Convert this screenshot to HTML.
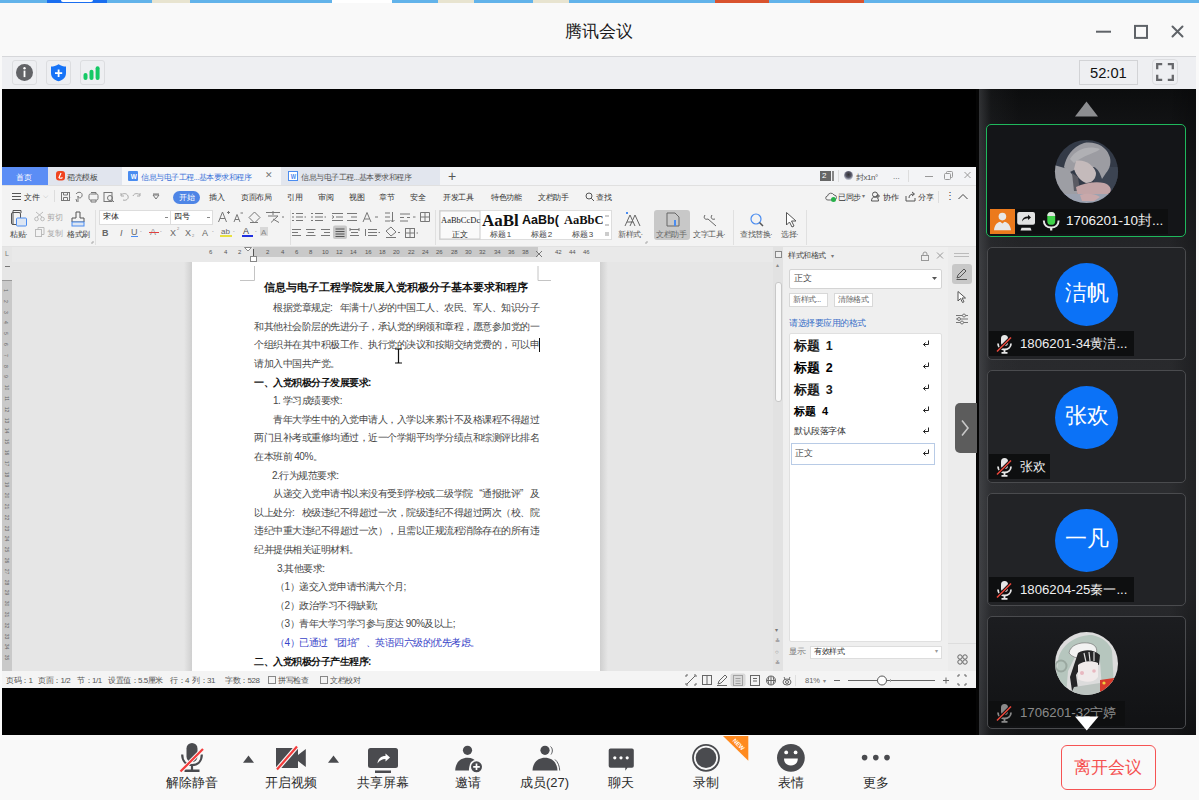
<!DOCTYPE html>
<html><head><meta charset="utf-8">
<style>
*{margin:0;padding:0;box-sizing:border-box}
html,body{width:1199px;height:800px;overflow:hidden;background:#f9f9f9;font-family:"Liberation Sans",sans-serif;position:relative}
.a{position:absolute}
.t{position:absolute;white-space:nowrap;line-height:1}
</style></head><body>
<!-- top desktop strip -->
<div class="a" style="left:0;top:0;width:1199px;height:3px;background:#62b3ea"></div>
<div class="a" style="left:47px;top:0;width:60px;height:3px;background:#1a6ef0"></div>
<div class="a" style="left:61px;top:0;width:32px;height:2px;background:#fff;border-radius:0 0 16px 16px"></div>
<div class="a" style="left:152px;top:0;width:38px;height:3px;background:#e8e4d0"></div>
<div class="a" style="left:332px;top:0;width:60px;height:3px;background:#fff"></div>
<div class="a" style="left:438px;top:0;width:36px;height:3px;background:#e8e4d0"></div>
<div class="a" style="left:533px;top:0;width:36px;height:3px;background:#e8e4d0"></div>
<div class="a" style="left:715px;top:0;width:54px;height:3px;background:#d9532e"></div>
<div class="a" style="left:810px;top:0;width:54px;height:3px;background:#d9532e"></div>
<!-- title bar -->
<div class="a" style="left:0;top:3px;width:1199px;height:53px;background:#f9f9f9"></div>
<div class="t" style="left:565px;top:23px;font-size:17px;color:#1a1a1a">腾讯会议</div>
<svg class="a" style="left:1090px;top:20px" width="100" height="24" viewBox="0 0 100 24">
 <path d="M6 11.7H21" stroke="#5f6368" stroke-width="2"/>
 <rect x="45" y="5.9" width="12" height="12" fill="none" stroke="#5f6368" stroke-width="2"/>
 <path d="M82.5 6.5L92.5 16.5M92.5 6.5L82.5 16.5" stroke="#5f6368" stroke-width="2" stroke-linecap="round"/>
</svg>
<!-- toolbar -->
<div class="a" style="left:2px;top:56px;width:1194px;height:33px;background:#eeeff2;border-top:1px solid #d6d7da"></div>
<div class="a" style="left:12px;top:60px;width:25px;height:25px;border:1px solid #dcdde0;border-radius:3px"></div>
<div class="a" style="left:46px;top:60px;width:25px;height:25px;border:1px solid #dcdde0;border-radius:3px"></div>
<div class="a" style="left:80px;top:60px;width:25px;height:25px;border:1px solid #dcdde0;border-radius:3px"></div>
<svg class="a" style="left:12px;top:60px" width="95" height="25" viewBox="0 0 95 25">
 <circle cx="12.5" cy="12.5" r="8.5" fill="#626367"/>
 <circle cx="12.5" cy="8.3" r="1.2" fill="#fff"/>
 <rect x="11.6" y="10.6" width="1.8" height="6.5" fill="#fff"/>
 <path d="M46.6 4.2 C44 6 41.5 6.5 39 6.5 V13 C39 17.5 42 20 46.6 21.2 C51.2 20 54 17.5 54 13 V6.5 C51.5 6.5 49 6 46.6 4.2Z" fill="#1673f7"/>
 <path d="M46.6 9.6V17M43 13.2H50.2" stroke="#fff" stroke-width="1.8"/>
 <rect x="71.5" y="13" width="4" height="7" rx="2" fill="#14c965"/>
 <rect x="77.5" y="9.8" width="4" height="10.2" rx="2" fill="#14c965"/>
 <rect x="83.6" y="6.2" width="4" height="13.8" rx="2" fill="#14c965"/>
</svg>
<div class="a" style="left:1079px;top:60px;width:59px;height:25px;border:1px solid #d2d3d6"></div>
<div class="t" style="left:1090px;top:65.5px;font-size:14.7px;color:#111">52:01</div>
<div class="a" style="left:1152px;top:59px;width:26px;height:26px;border:1px solid #dcdde0;border-radius:4px"></div>
<svg class="a" style="left:1152px;top:59px" width="26" height="26" viewBox="0 0 26 26">
 <path d="M5.2 10.2V5.2H10.2M15.8 5.2H20.8V10.2M20.8 15.8V20.8H15.8M10.2 20.8H5.2V15.8" fill="none" stroke="#66676b" stroke-width="2.3"/>
</svg>
<!-- main black -->
<div class="a" style="left:2px;top:89px;width:975px;height:646px;background:#000"></div>
<!-- right panel -->
<div class="a" style="left:976px;top:89px;width:220px;height:646px;background:linear-gradient(180deg,#0c0d0e 0px,#141517 50px,#26272a 170px,#2c2d30 400px,#2a2b2e 500px,#1e1f22 580px,#131416 646px)"></div>
<div class="a" style="left:976px;top:89px;width:3px;height:646px;background:#050505"></div>
<div class="a" style="left:979px;top:89px;width:217px;height:646px;background:linear-gradient(90deg,rgba(90,92,96,.45) 0,rgba(60,62,66,.15) 12px,rgba(0,0,0,0) 40px,rgba(0,0,0,0) 190px,rgba(0,0,0,.25) 217px)"></div>
<svg class="a" style="left:1074px;top:101px" width="25" height="16" viewBox="0 0 25 16"><path d="M12.5 0.5L24 15.5H1Z" fill="#8c8d90"/></svg>

<div class="a" style="left:986px;top:124px;width:200px;height:113px;border:1.5px solid #1fb85c;border-radius:5px;background:#141518"></div>
<svg class="a" style="left:1054px;top:139px" width="65" height="65" viewBox="0 0 65 65">
<defs><clipPath id="c1"><circle cx="32.5" cy="32.5" r="31.6"/></clipPath></defs>
<g clip-path="url(#c1)">
<rect width="65" height="65" fill="#333a47"/>
<rect x="40" y="28" width="25" height="30" fill="#3c4452"/>
<path d="M10 28C12 18 18 8 30 4C42 2 52 8 55 16C58 22 56 30 52 34L48 40C46 34 44 30 40 28L22 30L14 34Z" fill="#9c9ca2"/>
<path d="M16 20C22 10 34 6 46 10C42 14 30 16 20 24Z" fill="#b0b0b4"/>
<path d="M22 22C30 20 40 26 42 34C42 40 38 44 32 44C26 42 22 36 20 30Z" fill="#c4babb"/>
<path d="M0 26L14 30L20 38L24 56L18 65H0Z" fill="#9d9ea4"/>
<path d="M18 34L24 38L26 52L20 52Z" fill="#5a5a62"/>
<path d="M22 48C30 44 42 42 50 44C56 46 58 50 56 54C48 58 36 60 24 58Z" fill="#c2a4a6"/>
<rect x="0" y="55" width="65" height="10" fill="#9ca2b0"/>
<path d="M26 56C32 54 40 54 46 58L40 62H28Z" fill="#c8a8aa"/>
</g></svg>
<div class="a" style="left:990px;top:209px;width:178px;height:25px;background:#0e0f10"></div>
<div class="a" style="left:990px;top:209px;width:25px;height:25px;background:#ec7a1c"></div>
<svg class="a" style="left:990px;top:209px" width="75" height="25" viewBox="0 0 75 25">
<circle cx="12.4" cy="7.6" r="3.8" fill="#e8e8e8"/>
<path d="M4 21.2C4.5 16 7.5 13 10.2 12.8L12.4 14.6L14.6 12.8C17.3 13 20.3 16 21 21.2Z" fill="#e8e8e8"/>
<rect x="27.2" y="3" width="17.8" height="12.8" rx="2" fill="#e2e2e2"/>
<path d="M32 12.5C32.3 9.3 34.5 7.6 38 7.6V5.8L41 8.4L38 11V9.3C35.5 9.3 33.6 10.4 32 12.5Z" fill="#111"/>
<path d="M30.5 21.5H41.5L40.5 18.8H31.5Z" fill="#e2e2e2"/>
<rect x="57.3" y="3" width="7.9" height="12.8" rx="3.9" fill="#3fd24a"/>
<path d="M57.3 7A3.9 3.9 0 0 1 65.2 7" fill="#e2e2e2"/>
<path d="M53.8 11.6C53.8 16 57 18.6 61.2 18.6C65.4 18.6 68.6 16 68.6 11.6" fill="none" stroke="#e6e6e6" stroke-width="2"/>
<path d="M61.2 18.6V21.5" stroke="#e6e6e6" stroke-width="2.2"/>
</svg>
<div class="t" style="left:1066px;top:214px;font-size:13.5px;color:#f2f2f2">1706201-10封...</div>
<div class="a" style="left:987px;top:247px;width:199px;height:113px;border:1px solid #4a4b4e;border-radius:5px;background:#222326"></div>
<div class="a" style="left:1055px;top:263px;width:63px;height:63px;border-radius:50%;background:#0b72f7"></div>
<div class="t" style="left:1054px;top:282px;width:65px;text-align:center;font-size:22px;color:#fff">洁帆</div>
<div class="a" style="left:989px;top:331px;width:145px;height:25px;background:#0e0f10"></div>
<svg class="a" style="left:995px;top:334px" width="18" height="20" viewBox="0 0 18 20">
<rect x="6" y="1" width="7" height="11" rx="3.5" fill="#e6e6e6"/>
<path d="M3 9.5C3 13 5.8 15.5 9.5 15.5C13.2 15.5 16 13 16 9.5" fill="none" stroke="#e6e6e6" stroke-width="1.8"/>
<path d="M9.5 15.5V18.5M6.5 18.8H12.5" stroke="#e6e6e6" stroke-width="1.8"/>
<path d="M2 17.5L16 3.5" stroke="#0e0f10" stroke-width="3.2"/>
<path d="M2 17.5L16 3.5" stroke="#e8463a" stroke-width="1.6"/>
</svg>
<div class="t" style="left:1020px;top:337px;font-size:13.2px;color:#f0f0f0">1806201-34黄洁...</div>
<div class="a" style="left:987px;top:370px;width:199px;height:113px;border:1px solid #4a4b4e;border-radius:5px;background:#222326"></div>
<div class="a" style="left:1055px;top:386px;width:63px;height:63px;border-radius:50%;background:#0b72f7"></div>
<div class="t" style="left:1054px;top:405px;width:65px;text-align:center;font-size:22px;color:#fff">张欢</div>
<div class="a" style="left:989px;top:454px;width:61px;height:25px;background:#0e0f10"></div>
<svg class="a" style="left:995px;top:457px" width="18" height="20" viewBox="0 0 18 20">
<rect x="6" y="1" width="7" height="11" rx="3.5" fill="#e6e6e6"/>
<path d="M3 9.5C3 13 5.8 15.5 9.5 15.5C13.2 15.5 16 13 16 9.5" fill="none" stroke="#e6e6e6" stroke-width="1.8"/>
<path d="M9.5 15.5V18.5M6.5 18.8H12.5" stroke="#e6e6e6" stroke-width="1.8"/>
<path d="M2 17.5L16 3.5" stroke="#0e0f10" stroke-width="3.2"/>
<path d="M2 17.5L16 3.5" stroke="#e8463a" stroke-width="1.6"/>
</svg>
<div class="t" style="left:1020px;top:460px;font-size:13.2px;color:#f0f0f0">张欢</div>
<div class="a" style="left:987px;top:493px;width:199px;height:113px;border:1px solid #4a4b4e;border-radius:5px;background:#222326"></div>
<div class="a" style="left:1055px;top:509px;width:63px;height:63px;border-radius:50%;background:#0b72f7"></div>
<div class="t" style="left:1054px;top:528px;width:65px;text-align:center;font-size:22px;color:#fff">一凡</div>
<div class="a" style="left:989px;top:577px;width:145px;height:25px;background:#0e0f10"></div>
<svg class="a" style="left:995px;top:580px" width="18" height="20" viewBox="0 0 18 20">
<rect x="6" y="1" width="7" height="11" rx="3.5" fill="#e6e6e6"/>
<path d="M3 9.5C3 13 5.8 15.5 9.5 15.5C13.2 15.5 16 13 16 9.5" fill="none" stroke="#e6e6e6" stroke-width="1.8"/>
<path d="M9.5 15.5V18.5M6.5 18.8H12.5" stroke="#e6e6e6" stroke-width="1.8"/>
<path d="M2 17.5L16 3.5" stroke="#0e0f10" stroke-width="3.2"/>
<path d="M2 17.5L16 3.5" stroke="#e8463a" stroke-width="1.6"/>
</svg>
<div class="t" style="left:1020px;top:583px;font-size:13.2px;color:#f0f0f0">1806204-25秦一...</div>
<div class="a" style="left:987px;top:616px;width:199px;height:113px;border:1px solid #4a4b4e;border-radius:5px;background:linear-gradient(180deg,#1c1d20,#111214)"></div>
<svg class="a" style="left:1054px;top:631px" width="65" height="65" viewBox="0 0 65 65">
<defs><clipPath id="c2"><circle cx="32.5" cy="32.5" r="31.5"/></clipPath></defs>
<g clip-path="url(#c2)">
<rect width="65" height="65" fill="#dcdcdc"/>
<path d="M4 30C6 14 22 4 38 4C48 6 56 12 58 20L60 56L48 58L46 30C44 22 30 18 22 24L14 40L12 65H0Z" fill="#b6c6be"/>
<circle cx="7" cy="35" r="5.5" fill="none" stroke="#9aa8a0" stroke-width="2"/>
<path d="M15 22C16 14 26 11 34 12C42 13 44 18 42 24C38 28 20 30 15 22Z" fill="#f2f2f2" stroke="#666" stroke-width=".6"/>
<path d="M24 22C30 18 40 18 46 24L45 34L40 32L28 34L22 44L24 58L18 60L16 46Z" fill="#252527"/>
<path d="M24 34C28 30 38 29 44 32L44 46C40 52 30 52 24 48Z" fill="#f0eaea"/>
<path d="M30 22L32 31M35 21L36 30M40 21L40 30" stroke="#dcdcdc" stroke-width="1.2"/>
<circle cx="28" cy="42" r="2" fill="#e8b8c0"/><circle cx="40" cy="40" r="1.8" fill="#e8b8c0"/>
<path d="M20 56L46 52L50 65H16Z" fill="#bcc4c0"/>
<path d="M46 49L60 47L62 62L46 62Z" fill="#d63a2c"/>
<circle cx="50" cy="52" r="1.6" fill="#f0d040"/>
</g></svg>
<div class="a" style="left:989px;top:701px;width:136px;height:25px;background:#0e0f10"></div>
<svg class="a" style="left:995px;top:703px" width="18" height="20" viewBox="0 0 18 20">
<rect x="6" y="1" width="7" height="11" rx="3.5" fill="#8a8a8a"/>
<path d="M3 9.5C3 13 5.8 15.5 9.5 15.5C13.2 15.5 16 13 16 9.5" fill="none" stroke="#8a8a8a" stroke-width="1.8"/>
<path d="M9.5 15.5V18.5M6.5 18.8H12.5" stroke="#8a8a8a" stroke-width="1.8"/>
<path d="M2 17.5L16 3.5" stroke="#0e0f10" stroke-width="3.2"/>
<path d="M2 17.5L16 3.5" stroke="#e8463a" stroke-width="1.6"/>
</svg>
<div class="t" style="left:1020px;top:706px;font-size:13.2px;color:#8a8a8a">1706201-32宁婷</div>
<svg class="a" style="left:1075px;top:716px" width="24" height="15" viewBox="0 0 24 15"><path d="M0 0.5H23.5L11.75 14.5Z" fill="#fff"/></svg>
<div class="a" style="left:2px;top:167px;width:974px;height:521px;background:#f3f3f3"></div>
<div class="a" style="left:2px;top:167px;width:974px;height:18px;background:#f3f4f6"></div>
<div class="a" style="left:2px;top:167px;width:46px;height:18px;background:#5b8df5"></div>
<div class="t" style="left:16px;top:174px;font-size:8px;color:#fff;letter-spacing:-0.5px;">首页</div>
<div class="a" style="left:48px;top:167px;width:74px;height:18px;background:#e1e5ee"></div>
<svg class="a" style="left:56px;top:171px" width="10" height="10"><rect x="0" y="0" width="9" height="9.5" rx="3" fill="#f0441f"/><path d="M5 2L3 6.5Q4.5 8 6.5 6.5" fill="none" stroke="#fff" stroke-width="1.2"/></svg>
<div class="t" style="left:67px;top:174px;font-size:8px;color:#444;letter-spacing:-0.5px;">稻壳模板</div>
<div class="a" style="left:122px;top:167px;width:159px;height:18px;background:#f6f7f9"></div>
<div class="a" style="left:128px;top:171px;width:10px;height:10px;background:#4a8cf0;border-radius:1px"></div>
<div class="t" style="left:129.5px;top:172.5px;font-size:8px;color:#fff;font-weight:bold;transform:scaleX(.8)">W</div>
<div class="t" style="left:141px;top:174px;font-size:8px;color:#3a72d8;letter-spacing:-0.5px;">信息与电子工程...基本要求和程序</div>
<div class="t" style="left:265px;top:171px;font-size:9px;color:#777;">✕</div>
<div class="a" style="left:281px;top:167px;width:159px;height:18px;background:#e2e6ee"></div>
<div class="a" style="left:288px;top:171px;width:10px;height:10px;border:1px solid #4a8cf0;background:#fff"></div>
<div class="t" style="left:289.5px;top:172.5px;font-size:7px;color:#4a8cf0;font-weight:bold;transform:scaleX(.8)">W</div>
<div class="t" style="left:301px;top:174px;font-size:8px;color:#555;letter-spacing:-0.5px;">信息与电子工程...基本要求和程序</div>
<div class="t" style="left:448px;top:169px;font-size:14px;color:#555;">+</div>
<div class="a" style="left:2px;top:185px;width:974px;height:1px;background:#e0e0e0"></div>
<div class="a" style="left:820px;top:171px;width:11px;height:10px;background:#666"></div>
<div class="t" style="left:822px;top:172px;font-size:8px;color:#fff;">2</div>
<div class="a" style="left:832px;top:171px;width:2px;height:10px;background:#888"></div>
<div class="a" style="left:838px;top:170px;width:1px;height:12px;background:#ddd"></div>
<div class="a" style="left:844px;top:171px;width:9px;height:9px;border-radius:50%;background:radial-gradient(circle at 50% 40%,#333 0,#556 40%,#b8bcc8 70%)"></div>
<div class="t" style="left:856px;top:174px;font-size:8px;color:#555;letter-spacing:-0.5px;">封x1n°</div>
<div class="t" style="left:893px;top:173px;font-size:8px;color:#555;">...</div>
<div class="a" style="left:908px;top:170px;width:1px;height:12px;background:#ddd"></div>
<div class="a" style="left:925px;top:176px;width:8px;height:1px;background:#999"></div>
<svg class="a" style="left:943px;top:170px" width="30" height="12"><rect x="1.5" y="3.5" width="6" height="6" rx="1" fill="#f3f4f6" stroke="#999"/><path d="M3.5 3.5V2.5Q3.5 1.5 4.5 1.5H8.5Q9.5 1.5 9.5 2.5V6.5Q9.5 7.5 8.5 7.5H7.5" fill="none" stroke="#999"/><path d="M21.5 2L27.5 8M27.5 2L21.5 8" stroke="#999"/></svg>
<div class="a" style="left:2px;top:186px;width:974px;height:20px;background:#f3f3f3"></div>
<svg class="a" style="left:12px;top:193px" width="10" height="8"><path d="M0 0.5H9M0 3.5H9M0 6.5H9" stroke="#555" stroke-width="1"/></svg>
<div class="t" style="left:24px;top:194px;font-size:8px;color:#333;letter-spacing:-0.5px;">文件</div>
<div class="t" style="left:43px;top:192px;font-size:7px;color:#888;">⌵</div>
<div class="a" style="left:54px;top:190px;width:1px;height:12px;background:#ddd"></div>
<svg class="a" style="left:60px;top:191px" width="110" height="12" viewBox="0 0 110 12">
<g fill="none" stroke="#777" stroke-width="1">
<rect x="1.5" y="1.5" width="8" height="8"/><path d="M3.5 1.5V4H7.5V1.5M3.5 9.5V6.5H7.5V9.5"/>
<path d="M16 3C18 0 23 1 22 5C21 8 18 7 18 5M18 5V11M16 8L17 11"/>
<rect x="29" y="3" width="9" height="6" rx="1.5"/><path d="M31 1.5H36V3M31 9V11H36V9"/>
<rect x="44" y="1.5" width="8" height="9"/><circle cx="50" cy="7" r="2.5"/><path d="M52 9L54 11"/>
</g>
<g fill="none" stroke="#aaa" stroke-width="1"><path d="M61 4C63 2 67 2 68 5C69 8 66 10 63 9M61 2V5H64"/><path d="M80 4C78 2 74 2 73 5M80 2V5H77"/></g>
<path d="M93 4L96 8L99 4Z" fill="none" stroke="#777"/><path d="M93 3H99" stroke="#777"/>
</svg>
<div class="t" style="left:69.5px;top:194px;font-size:6px;color:#aaa;">·</div>
<div class="a" style="left:173px;top:191px;width:27px;height:13px;background:#4e85e6;border-radius:7px"></div>
<div class="t" style="left:179px;top:194px;font-size:8px;color:#fff;letter-spacing:-0.5px;">开始</div>
<div class="t" style="left:209px;top:194px;font-size:8px;color:#333;letter-spacing:-0.5px;">插入</div>
<div class="t" style="left:241px;top:194px;font-size:8px;color:#333;letter-spacing:-0.5px;">页面布局</div>
<div class="t" style="left:287px;top:194px;font-size:8px;color:#333;letter-spacing:-0.5px;">引用</div>
<div class="t" style="left:318px;top:194px;font-size:8px;color:#333;letter-spacing:-0.5px;">审阅</div>
<div class="t" style="left:349px;top:194px;font-size:8px;color:#333;letter-spacing:-0.5px;">视图</div>
<div class="t" style="left:379px;top:194px;font-size:8px;color:#333;letter-spacing:-0.5px;">章节</div>
<div class="t" style="left:410px;top:194px;font-size:8px;color:#333;letter-spacing:-0.5px;">安全</div>
<div class="t" style="left:443px;top:194px;font-size:8px;color:#333;letter-spacing:-0.5px;">开发工具</div>
<div class="t" style="left:491px;top:194px;font-size:8px;color:#333;letter-spacing:-0.5px;">特色功能</div>
<div class="t" style="left:538px;top:194px;font-size:8px;color:#333;letter-spacing:-0.5px;">文档助手</div>
<svg class="a" style="left:585px;top:192px" width="10" height="10"><circle cx="4" cy="4" r="3" fill="none" stroke="#555"/><path d="M6.2 6.2L9 9" stroke="#555"/></svg>
<div class="t" style="left:596px;top:194px;font-size:8px;color:#333;letter-spacing:-0.5px;">查找</div>
<svg class="a" style="left:825px;top:191px" width="12" height="11"><path d="M3 9H9A2.5 2.5 0 0 0 9 4A3.5 3.5 0 0 0 2.5 5A2 2 0 0 0 3 9Z" fill="none" stroke="#666"/><circle cx="8.5" cy="8.5" r="2.5" fill="#27b04a"/></svg>
<div class="t" style="left:838px;top:194px;font-size:8px;color:#333;letter-spacing:-0.5px;">已同步</div>
<div class="t" style="left:862px;top:193px;font-size:6px;color:#777;">▾</div>
<svg class="a" style="left:871px;top:191px" width="10" height="11"><circle cx="4" cy="3.5" r="2.5" fill="none" stroke="#555"/><path d="M0.5 10C0.5 7 2 6 4 6C6 6 7.5 7 7.5 10Z" fill="none" stroke="#555"/><path d="M7 3V7M5 5H9" stroke="#555"/></svg>
<div class="t" style="left:883px;top:194px;font-size:8px;color:#333;letter-spacing:-0.5px;">协作</div>
<svg class="a" style="left:905px;top:191px" width="11" height="11"><path d="M1 5V10H10V7M4 7C4 4 6 3 9 3M7 1L9.5 3L7 5" fill="none" stroke="#555"/></svg>
<div class="t" style="left:918px;top:194px;font-size:8px;color:#333;letter-spacing:-0.5px;">分享</div>
<div class="a" style="left:938px;top:191px;width:1px;height:12px;background:#ddd"></div>
<div class="t" style="left:945px;top:191px;font-size:10px;color:#444;">⋮</div>
<svg class="a" style="left:958px;top:193px" width="10" height="7"><path d="M0.5 6L5 1.5L9.5 6" fill="none" stroke="#444"/></svg>
<div class="a" style="left:2px;top:206px;width:974px;height:41px;background:#f3f3f3"></div>
<svg class="a" style="left:2px;top:206px" width="974" height="41" viewBox="2 206 974 41">
<g fill="none" stroke="#555" stroke-width="1">
 <path d="M13 225V210.5H21V213"/><rect x="11.5" y="212.5" width="9" height="12" rx="1.5"/>
 <rect x="16.5" y="218" width="10" height="8" rx="1" fill="#dde6f3" stroke="#4a8cf0"/>
 <path d="M76 212H80V218H84V222H72V218H76Z"/><rect x="72" y="222" width="12" height="4" fill="#dde6f3" stroke="#4a8cf0"/>
</g>
<g fill="none" stroke="#bbb" stroke-width="1">
 <circle cx="36.5" cy="219" r="1.8"/><circle cx="42.5" cy="219" r="1.8"/><path d="M37 217L43 212M42 217L36 212"/>
 <rect x="35.5" y="229.5" width="6" height="7"/><path d="M38 229V227.5H44V234.5H42"/>
</g>
<path d="M95.5 210V245" stroke="#e0e0e0"/>
<rect x="99.5" y="210.5" width="71" height="14" fill="#fff" stroke="#ddd"/>
<rect x="170.5" y="210.5" width="42" height="14" fill="#fff" stroke="#ddd"/>
<path d="M165 217.5H168M207 217.5H210" stroke="#888"/>
<g fill="none" stroke="#777" stroke-width="1">
 <path d="M218.5 222L222.5 212L226.5 222M220 218.5H225"/><path d="M227 212.5H230M228.5 211V214"/>
 <path d="M234 222L237 214.5L240 222M235 219.5H239"/><path d="M240.5 213H243"/>
 <path d="M249 217.5L254.5 212L260 217.5L254.5 223Z M250 222.5H258"/>
 <path d="M266 212.5H280M273 211V215M268 216H278L271 222.5M273 219L279 222.5"/><path d="M282 217H284"/>
 <path d="M292 213.5H294M296 213.5H303M292 217H294M296 217H303M292 220.5H294M296 220.5H303M304.5 217H306"/>
 <path d="M311 213.5H313M315 213.5H323M311 217H313M315 217H323M311 220.5H313M315 220.5H323M324.5 217H326"/>
 <path d="M332 213.5H343M336 217H343M332 220.5H343M332 215.5L334 217L332 218.5"/>
 <path d="M347 213.5H357M351 217H357M347 220.5H357"/>
 <path d="M363 222L367 212.5L371 222M364.5 219H369.5M375 217H378"/>
 <path d="M385 213H390M385 217H390M385 221H390M392.5 212V222M390.5 220L392.5 222L394.5 220"/>
 <path d="M400 214H410M400 217.5H404M407 217.5H410M400 221H408M413 217H415.5"/>
 <path d="M420.5 212.5H429.5V221.5H420.5ZM420.5 217H429.5M425 212.5V221.5"/>
 <path d="M292 229.5H301M292 232.5H298M292 235.5H301"/>
 <path d="M306 229.5H315.5M307.5 232.5H314M306 235.5H315.5"/>
 <path d="M321 229.5H330M324 232.5H330M321 235.5H330"/>
 <path d="M350 229.5H359M350 235.5H359M351 232.5H358M350 228V231M359 228V231"/>
 <path d="M368 229.5H377M368 232.5H377M368 235.5H377M365.5 229V236"/><path d="M378.5 232.5H380"/>
 <path d="M386 231L391 227L396 232L391 236Z"/><path d="M386 237.5H396M398 232.5H400"/>
 <rect x="405.5" y="228.5" width="9" height="9"/><path d="M410 228.5V237.5M405.5 233H414.5M416.5 233H418"/>
</g>
<rect x="333" y="225.5" width="14" height="13.5" rx="2" fill="#c8c8c8"/>
<path d="M335.5 229H344.5M335.5 231.5H344.5M335.5 234H344.5M335.5 236.5H344.5" stroke="#555"/>
<g fill="#666" font-family="Liberation Sans" font-size="9">
 <text x="102" y="236" font-weight="bold">B</text>
 <text x="120" y="236" font-style="italic">I</text>
 <text x="131" y="235">U</text>
 <text x="202" y="236">A</text>
 <text x="170" y="236">X</text><text x="185" y="236">X</text>
</g>
<g fill="#888" font-family="Liberation Sans" font-size="4"><text x="177" y="230">2</text><text x="192" y="237">2</text></g>
<path d="M131 236.5H138" stroke="#4a8cf0"/>
<text x="150" y="235" font-family="Liberation Sans" font-size="9" fill="#888">A</text><path d="M149 232.5H159" stroke="#e04040"/>
<text x="221" y="234" font-family="Liberation Sans" font-size="8" fill="#666">ab</text><rect x="220" y="235" width="12" height="2" fill="#e8e040"/>
<text x="243" y="234" font-family="Liberation Sans" font-size="9" fill="#444">A</text><rect x="242" y="235" width="11" height="2" fill="#2030e0"/>
<rect x="260" y="227" width="8" height="9" fill="#d8d8d8"/><text x="261" y="235" font-family="Liberation Sans" font-size="8" fill="#888">A</text>
<g fill="#888" font-size="5" font-family="Liberation Sans">
 <text x="140" y="233">-</text><text x="160" y="233">-</text><text x="212" y="233">-</text><text x="233" y="233">-</text><text x="255" y="233">-</text>
</g>
<path d="M290.5 210V245M435.5 210V245" stroke="#e0e0e0"/>
<rect x="439.5" y="210.5" width="172" height="29" fill="#fff" stroke="#ddd"/>
<rect x="440" y="211" width="40" height="28" fill="#fafafa" stroke="#ccc"/>
<text x="441" y="223" font-family="Liberation Serif" font-size="8.5" fill="#222">AaBbCcDc</text>
<text x="482" y="226" font-family="Liberation Serif" font-size="17" font-weight="bold" fill="#111">AaBl</text>
<text x="522" y="224" font-family="Liberation Sans" font-size="12.5" font-weight="bold" fill="#111">AaBb(</text>
<text x="564" y="224" font-family="Liberation Serif" font-size="12.5" font-weight="bold" fill="#111">AaBbC</text>
<rect x="603" y="211" width="8" height="28" fill="#fff"/>
<path d="M605 216H609M605 225H609M605 233H609M605 235H609" stroke="#999"/>
<g fill="none" stroke="#666"><path d="M625 226L630 215L635 226M627 222H633"/><path d="M630 226L635 215L640 226"/></g>
<path d="M626 212L628 214M628 212L626 214" stroke="#4a8cf0"/>
<rect x="654" y="210" width="36" height="30" rx="3" fill="#c8c8c8"/>
<g fill="none" stroke="#666"><path d="M667 213H675L679 217V226H667Z"/></g>
<path d="M675 220V226" stroke="#4a8cf0" stroke-width="2"/>
<path d="M705 215C703 218 705 220 708 219L716 226M712 215C710 218 712 220 715 219" fill="none" stroke="#666"/>
<path d="M733.5 210V245M806.5 210V245" stroke="#e0e0e0"/>
<circle cx="756" cy="219" r="5" fill="none" stroke="#4a8cf0" stroke-width="1.2"/><path d="M759.5 222.5L763 226" stroke="#555" stroke-width="1.5"/>
<path d="M786.5 212.5V225L789.5 222L792 227L794 226L791.5 221H796Z" fill="#fff" stroke="#555"/>
<path d="M91 243H93V241M645 243H647V241" stroke="#aaa" fill="none"/>
</svg>
<div class="t" style="left:10px;top:231px;font-size:8px;color:#444;letter-spacing:-0.5px;">粘贴·</div>
<div class="t" style="left:47px;top:214px;font-size:8px;color:#aaa;letter-spacing:-0.5px;">剪切</div>
<div class="t" style="left:47px;top:230px;font-size:8px;color:#aaa;letter-spacing:-0.5px;">复制</div>
<div class="t" style="left:67px;top:231px;font-size:8px;color:#444;letter-spacing:-0.5px;">格式刷</div>
<div class="t" style="left:103px;top:213px;font-size:8px;color:#222;letter-spacing:-0.5px;">宋体</div>
<div class="t" style="left:174px;top:213px;font-size:8px;color:#222;letter-spacing:-0.5px;">四号</div>
<div class="t" style="left:452px;top:231px;font-size:8px;color:#222;letter-spacing:-0.5px;">正文</div>
<div class="t" style="left:490px;top:231px;font-size:8px;color:#444;letter-spacing:-0.5px;">标题 1</div>
<div class="t" style="left:531px;top:231px;font-size:8px;color:#444;letter-spacing:-0.5px;">标题 2</div>
<div class="t" style="left:572px;top:231px;font-size:8px;color:#444;letter-spacing:-0.5px;">标题 3</div>
<div class="t" style="left:618px;top:231px;font-size:8px;color:#555;letter-spacing:-0.5px;">新样式·</div>
<div class="t" style="left:656px;top:231px;font-size:8px;color:#666;letter-spacing:-0.5px;">文档助手</div>
<div class="t" style="left:693px;top:231px;font-size:8px;color:#555;letter-spacing:-0.5px;">文字工具·</div>
<div class="t" style="left:740px;top:231px;font-size:8px;color:#555;letter-spacing:-0.5px;">查找替换·</div>
<div class="t" style="left:781px;top:231px;font-size:8px;color:#555;letter-spacing:-0.5px;">选择·</div>
<div class="a" style="left:2px;top:246px;width:974px;height:1px;background:#e2e2e2"></div>
<div class="a" style="left:2px;top:247px;width:771px;height:425px;background:#e6e6e6"></div>
<div class="a" style="left:12px;top:247px;width:761px;height:15px;background:#e9e9e9"></div>
<div class="a" style="left:253px;top:247px;width:285px;height:10px;background:#c9c9c9"></div>
<div class="a" style="left:2px;top:280px;width:10px;height:391px;background:#c9c9c9;border-top:1px solid #999"></div>
<div class="t" style="left:209px;top:249px;font-size:6px;color:#555;">6</div>
<div class="t" style="left:224px;top:249px;font-size:6px;color:#555;">4</div>
<div class="t" style="left:238px;top:249px;font-size:6px;color:#555;">2</div>
<div class="t" style="left:266px;top:249px;font-size:6px;color:#555;">2</div>
<div class="t" style="left:281px;top:249px;font-size:6px;color:#555;">4</div>
<div class="t" style="left:295px;top:249px;font-size:6px;color:#555;">6</div>
<div class="t" style="left:309px;top:249px;font-size:6px;color:#555;">8</div>
<div class="t" style="left:322px;top:249px;font-size:6px;color:#555;">10</div>
<div class="t" style="left:336px;top:249px;font-size:6px;color:#555;">12</div>
<div class="t" style="left:350px;top:249px;font-size:6px;color:#555;">14</div>
<div class="t" style="left:365px;top:249px;font-size:6px;color:#555;">16</div>
<div class="t" style="left:379px;top:249px;font-size:6px;color:#555;">18</div>
<div class="t" style="left:393px;top:249px;font-size:6px;color:#555;">20</div>
<div class="t" style="left:408px;top:249px;font-size:6px;color:#555;">22</div>
<div class="t" style="left:422px;top:249px;font-size:6px;color:#555;">24</div>
<div class="t" style="left:436px;top:249px;font-size:6px;color:#555;">26</div>
<div class="t" style="left:451px;top:249px;font-size:6px;color:#555;">28</div>
<div class="t" style="left:465px;top:249px;font-size:6px;color:#555;">30</div>
<div class="t" style="left:479px;top:249px;font-size:6px;color:#555;">32</div>
<div class="t" style="left:494px;top:249px;font-size:6px;color:#555;">34</div>
<div class="t" style="left:508px;top:249px;font-size:6px;color:#555;">36</div>
<div class="t" style="left:522px;top:249px;font-size:6px;color:#555;">38</div>
<div class="t" style="left:555px;top:249px;font-size:6px;color:#555;">42</div>
<div class="t" style="left:569px;top:249px;font-size:6px;color:#555;">44</div>
<div class="t" style="left:583px;top:249px;font-size:6px;color:#555;">46</div>
<div class="a" style="left:253px;top:249px;width:1px;height:8px;background:#555"></div>
<div class="a" style="left:250px;top:256px;width:7px;height:6px;background:#fff;border:1px solid #888"></div>
<svg class="a" style="left:244px;top:247px" width="8" height="5"><path d="M0.5 0.5H7.5L4 4Z" fill="#fff" stroke="#888"/></svg>
<svg class="a" style="left:535px;top:250px" width="8" height="8"><path d="M1 1L4 4L7 1M1 7L4 4L7 7" fill="none" stroke="#777"/></svg>
<div class="t" style="left:5px;top:250px;font-size:7px;color:#777;">L</div>
<div class="a" style="left:5px;top:266px;width:5px;height:1px;background:#777"></div>
<div class="t" style="left:4px;top:288.0px;font-size:5px;color:#666;transform:rotate(90deg)">1</div>
<div class="t" style="left:4px;top:298.8px;font-size:5px;color:#666;transform:rotate(90deg)">2</div>
<div class="t" style="left:4px;top:309.6px;font-size:5px;color:#666;transform:rotate(90deg)">3</div>
<div class="t" style="left:4px;top:320.4px;font-size:5px;color:#666;transform:rotate(90deg)">4</div>
<div class="t" style="left:4px;top:331.2px;font-size:5px;color:#666;transform:rotate(90deg)">5</div>
<div class="t" style="left:4px;top:342.0px;font-size:5px;color:#666;transform:rotate(90deg)">6</div>
<div class="t" style="left:4px;top:352.8px;font-size:5px;color:#666;transform:rotate(90deg)">7</div>
<div class="t" style="left:4px;top:363.6px;font-size:5px;color:#666;transform:rotate(90deg)">8</div>
<div class="t" style="left:4px;top:374.4px;font-size:5px;color:#666;transform:rotate(90deg)">9</div>
<div class="t" style="left:4px;top:385.2px;font-size:5px;color:#666;transform:rotate(90deg)">10</div>
<div class="t" style="left:4px;top:396.0px;font-size:5px;color:#666;transform:rotate(90deg)">11</div>
<div class="t" style="left:4px;top:406.8px;font-size:5px;color:#666;transform:rotate(90deg)">12</div>
<div class="t" style="left:4px;top:417.6px;font-size:5px;color:#666;transform:rotate(90deg)">13</div>
<div class="t" style="left:4px;top:428.4px;font-size:5px;color:#666;transform:rotate(90deg)">14</div>
<div class="t" style="left:4px;top:439.20000000000005px;font-size:5px;color:#666;transform:rotate(90deg)">15</div>
<div class="t" style="left:4px;top:450.0px;font-size:5px;color:#666;transform:rotate(90deg)">16</div>
<div class="t" style="left:4px;top:460.8px;font-size:5px;color:#666;transform:rotate(90deg)">17</div>
<div class="t" style="left:4px;top:471.6px;font-size:5px;color:#666;transform:rotate(90deg)">18</div>
<div class="t" style="left:4px;top:482.4px;font-size:5px;color:#666;transform:rotate(90deg)">19</div>
<div class="t" style="left:4px;top:493.20000000000005px;font-size:5px;color:#666;transform:rotate(90deg)">20</div>
<div class="t" style="left:4px;top:504.0px;font-size:5px;color:#666;transform:rotate(90deg)">21</div>
<div class="t" style="left:4px;top:514.8px;font-size:5px;color:#666;transform:rotate(90deg)">22</div>
<div class="t" style="left:4px;top:525.6px;font-size:5px;color:#666;transform:rotate(90deg)">23</div>
<div class="t" style="left:4px;top:536.4px;font-size:5px;color:#666;transform:rotate(90deg)">24</div>
<div class="t" style="left:4px;top:547.2px;font-size:5px;color:#666;transform:rotate(90deg)">25</div>
<div class="t" style="left:4px;top:558.0px;font-size:5px;color:#666;transform:rotate(90deg)">26</div>
<div class="t" style="left:4px;top:568.8px;font-size:5px;color:#666;transform:rotate(90deg)">27</div>
<div class="t" style="left:4px;top:579.6px;font-size:5px;color:#666;transform:rotate(90deg)">28</div>
<div class="t" style="left:4px;top:590.4000000000001px;font-size:5px;color:#666;transform:rotate(90deg)">29</div>
<div class="t" style="left:4px;top:601.2px;font-size:5px;color:#666;transform:rotate(90deg)">30</div>
<div class="t" style="left:4px;top:612.0px;font-size:5px;color:#666;transform:rotate(90deg)">31</div>
<div class="t" style="left:4px;top:622.8px;font-size:5px;color:#666;transform:rotate(90deg)">32</div>
<div class="t" style="left:4px;top:633.6px;font-size:5px;color:#666;transform:rotate(90deg)">33</div>
<div class="t" style="left:4px;top:644.4000000000001px;font-size:5px;color:#666;transform:rotate(90deg)">34</div>
<div class="t" style="left:4px;top:655.2px;font-size:5px;color:#666;transform:rotate(90deg)">35</div>
<div class="a" style="left:184px;top:262px;width:8px;height:410px;background:linear-gradient(90deg,#e6e6e6,#cfcfcf)"></div>
<div class="a" style="left:600px;top:262px;width:8px;height:410px;background:linear-gradient(90deg,#cfcfcf,#e6e6e6)"></div>
<div class="a" style="left:192px;top:262px;width:408px;height:410px;background:#fff"></div>
<svg class="a" style="left:225px;top:266px" width="345" height="16"><path d="M29.5 0V14.5H15M313 0V14.5H326" fill="none" stroke="#c4c4c4"/></svg>
<div class="t" style="left:264px;top:281.9px;font-size:10.9px;color:#111;font-weight:bold">信息与电子工程学院发展入党积极分子基本要求和程序</div>
<div class="t" style="left:273px;top:303.2px;font-size:10px;letter-spacing:-0.5px;color:#474747">根据党章规定<span style="display:inline-block;width:9.5px">:</span>年满十八岁的中国工人、农民、军人、知识分子</div>
<div class="t" style="left:254px;top:321.8px;font-size:10px;letter-spacing:-0.5px;color:#474747">和其他社会阶层的先进分子，承认党的纲领和章程，愿意参加党的一</div>
<div class="t" style="left:254px;top:340.4px;font-size:10px;letter-spacing:-0.5px;color:#474747">个组织并在其中积极工作、执行党的决议和按期交纳党费的，可以申</div>
<div class="t" style="left:254px;top:359.0px;font-size:10px;letter-spacing:-0.5px;color:#474747">请加入中国共产党。</div>
<div class="t" style="left:254px;top:377.6px;font-size:10px;letter-spacing:-0.5px;color:#151515;font-weight:bold">一、入党积极分子发展要求<span style="display:inline-block;width:9.5px">:</span></div>
<div class="t" style="left:273px;top:396.2px;font-size:10px;letter-spacing:-0.5px;color:#474747">1. 学习成绩要求<span style="display:inline-block;width:9.5px">:</span></div>
<div class="t" style="left:273px;top:414.8px;font-size:10px;letter-spacing:-0.5px;color:#474747">青年大学生中的入党申请人，入学以来累计不及格课程不得超过</div>
<div class="t" style="left:254px;top:433.4px;font-size:10px;letter-spacing:-0.5px;color:#474747">两门且补考或重修均通过，近一个学期平均学分绩点和综测评比排名</div>
<div class="t" style="left:254px;top:452.0px;font-size:10px;letter-spacing:-0.5px;color:#474747">在本班前 40%。</div>
<div class="t" style="left:272px;top:470.6px;font-size:10px;letter-spacing:-0.5px;color:#474747">2.行为规范要求<span style="display:inline-block;width:9.5px">:</span></div>
<div class="t" style="left:273px;top:489.2px;font-size:10px;letter-spacing:-0.5px;color:#474747">从递交入党申请书以来没有受到学校或二级学院<span style="display:inline-block;width:9.5px;text-align:right">“</span>通报批评<span style="display:inline-block;width:9.5px">”</span>及</div>
<div class="t" style="left:254px;top:507.79999999999995px;font-size:10px;letter-spacing:-0.5px;color:#474747">以上处分<span style="display:inline-block;width:9.5px">:</span>校级违纪不得超过一次，院级违纪不得超过两次（校、院</div>
<div class="t" style="left:254px;top:526.4px;font-size:10px;letter-spacing:-0.5px;color:#474747">违纪中重大违纪不得超过一次），且需以正规流程消除存在的所有违</div>
<div class="t" style="left:254px;top:545.0px;font-size:10px;letter-spacing:-0.5px;color:#474747">纪并提供相关证明材料。</div>
<div class="t" style="left:277px;top:563.6px;font-size:10px;letter-spacing:-0.5px;color:#474747">3.其他要求<span style="display:inline-block;width:9.5px">:</span></div>
<div class="t" style="left:275px;top:582.2px;font-size:10px;letter-spacing:-0.5px;color:#474747">（1）递交入党申请书满六个月;</div>
<div class="t" style="left:275px;top:600.8px;font-size:10px;letter-spacing:-0.5px;color:#474747">（2）政治学习不得缺勤;</div>
<div class="t" style="left:275px;top:619.4px;font-size:10px;letter-spacing:-0.5px;color:#474747">（3）青年大学习学习参与度达 90%及以上;</div>
<div class="t" style="left:275px;top:638.0px;font-size:10px;letter-spacing:-0.5px;color:#3843c8">（4）已通过<span style="display:inline-block;width:9.5px;text-align:right">“</span>团培<span style="display:inline-block;width:9.5px">”</span>、英语四六级的优先考虑。</div>
<div class="t" style="left:254px;top:656.6px;font-size:10px;letter-spacing:-0.5px;color:#151515;font-weight:bold">二、入党积极分子产生程序<span style="display:inline-block;width:9.5px">:</span></div>
<div class="a" style="left:539px;top:338px;width:1px;height:14px;background:#111"></div>
<svg class="a" style="left:394px;top:348px" width="9" height="16"><path d="M1 1H3.5Q4.5 1 4.5 2V14Q4.5 15 3.5 15H1M8 1H5.5Q4.5 1 4.5 2M8 15H5.5Q4.5 15 4.5 14" fill="none" stroke="#111" stroke-width="1.2"/></svg>
<div class="a" style="left:773px;top:247px;width:10px;height:424px;background:#e2e2e2"></div>
<div class="a" style="left:775px;top:282px;width:7px;height:120px;background:#f8f8f8;border:1px solid #c8c8c8;border-radius:3px"></div>
<div class="a" style="left:775px;top:251px;width:7px;height:7px;border:1px solid #888;background:#eee"></div>
<div class="t" style="left:776px;top:262px;font-size:6px;color:#888;">▴</div>
<div class="t" style="left:775px;top:627px;font-size:6px;color:#777;">▾</div>
<div class="t" style="left:775px;top:638px;font-size:6px;color:#777;">≛</div>
<div class="t" style="left:775px;top:649px;font-size:6px;color:#777;">○</div>
<div class="t" style="left:775px;top:660px;font-size:6px;color:#777;">≚</div>
<div class="a" style="left:783px;top:247px;width:165px;height:425px;background:#efefef"></div>
<div class="t" style="left:788px;top:252px;font-size:8px;color:#444;letter-spacing:-0.5px;">样式和格式</div>
<div class="t" style="left:831px;top:253px;font-size:6px;color:#777;">▾</div>
<svg class="a" style="left:920px;top:251px" width="25" height="10"><rect x="1.5" y="4.5" width="7" height="5" fill="none" stroke="#999"/><path d="M3 4.5V3A2 2 0 0 1 7 3V4.5" fill="none" stroke="#999"/><path d="M17 1.5L23 7.5M23 1.5L17 7.5" stroke="#999"/></svg>
<div class="a" style="left:789px;top:269px;width:153px;height:20px;background:#fff;border:1px solid #d4d4d4;border-radius:2px"></div>
<div class="t" style="left:794px;top:274px;font-size:9px;color:#555;letter-spacing:-0.45px;">正文</div>
<svg class="a" style="left:932px;top:277px" width="5" height="3"><path d="M0 0H5L2.5 3Z" fill="#555"/></svg>
<div class="a" style="left:789px;top:293px;width:39px;height:14px;background:#fff;border:1px solid #d8d8d8"></div>
<div class="t" style="left:793px;top:296px;font-size:8px;color:#666;letter-spacing:-0.5px;">新样式...</div>
<div class="a" style="left:834px;top:293px;width:39px;height:14px;background:#fff;border:1px solid #d8d8d8"></div>
<div class="t" style="left:838px;top:296px;font-size:8px;color:#666;letter-spacing:-0.5px;">清除格式</div>
<div class="t" style="left:789px;top:319px;font-size:9px;color:#3a6fc8;letter-spacing:-0.45px;">请选择要应用的格式</div>
<div class="a" style="left:789px;top:333px;width:153px;height:309px;background:#fff;border:1px solid #e0e0e0;border-radius:2px"></div>
<div class="t" style="left:794px;top:339.5px;font-size:12.5px;color:#1a1a1a;font-weight:bold;letter-spacing:-0.3px">标题&nbsp; 1</div>
<div class="t" style="left:794px;top:361.5px;font-size:12.5px;color:#000;font-weight:bold;letter-spacing:-0.3px">标题&nbsp; 2</div>
<div class="t" style="left:794px;top:383.5px;font-size:12.5px;color:#1a1a1a;font-weight:bold;letter-spacing:-0.3px">标题&nbsp; 3</div>
<div class="t" style="left:794px;top:405.5px;font-size:11px;color:#000;font-weight:bold">标题&nbsp; 4</div>
<div class="t" style="left:794px;top:427px;font-size:9px;color:#333;letter-spacing:-0.45px;">默认段落字体</div>
<div class="a" style="left:791px;top:443px;width:144px;height:22px;background:#fff;border:1px solid #b8cbe6"></div>
<div class="t" style="left:795px;top:449px;font-size:9px;color:#555;letter-spacing:-0.45px;">正文</div>
<svg class="a" style="left:922px;top:340px" width="8" height="7"><path d="M6.5 0.5V4.5H1.5M3.5 2.5L1.5 4.5L3.5 6.5" fill="none" stroke="#222"/></svg>
<svg class="a" style="left:922px;top:362px" width="8" height="7"><path d="M6.5 0.5V4.5H1.5M3.5 2.5L1.5 4.5L3.5 6.5" fill="none" stroke="#222"/></svg>
<svg class="a" style="left:922px;top:384px" width="8" height="7"><path d="M6.5 0.5V4.5H1.5M3.5 2.5L1.5 4.5L3.5 6.5" fill="none" stroke="#222"/></svg>
<svg class="a" style="left:922px;top:406px" width="8" height="7"><path d="M6.5 0.5V4.5H1.5M3.5 2.5L1.5 4.5L3.5 6.5" fill="none" stroke="#222"/></svg>
<svg class="a" style="left:922px;top:427px" width="8" height="7"><path d="M6.5 0.5V4.5H1.5M3.5 2.5L1.5 4.5L3.5 6.5" fill="none" stroke="#222"/></svg>
<svg class="a" style="left:922px;top:449px" width="8" height="7"><path d="M6.5 0.5V4.5H1.5M3.5 2.5L1.5 4.5L3.5 6.5" fill="none" stroke="#222"/></svg>
<div class="t" style="left:789px;top:648px;font-size:8px;color:#777;letter-spacing:-0.5px;">显示:</div>
<div class="a" style="left:810px;top:646px;width:132px;height:13px;background:#fff;border:1px solid #ddd"></div>
<div class="t" style="left:814px;top:648px;font-size:8px;color:#333;letter-spacing:-0.5px;">有效样式</div>
<div class="t" style="left:935px;top:648px;font-size:6px;color:#999;">▾</div>
<div class="a" style="left:948px;top:247px;width:28px;height:425px;background:#ececec"></div>
<div class="a" style="left:954px;top:253px;width:15px;height:1px;background:#bbb"></div>
<div class="a" style="left:954px;top:256px;width:15px;height:1px;background:#bbb"></div>
<div class="a" style="left:952px;top:264px;width:20px;height:20px;background:#c8c8c8;border-radius:3px"></div>
<svg class="a" style="left:954px;top:266px" width="16" height="16"><path d="M3 12L4 9L10 3L12 5L6 11Z M2.5 13.5H13" fill="none" stroke="#555"/></svg>
<svg class="a" style="left:956px;top:290px" width="12" height="14"><path d="M2 1.5V11L4.5 8.5L6.5 12.5L8 11.8L6 8H9.5Z" fill="#fff" stroke="#555"/></svg>
<svg class="a" style="left:955px;top:313px" width="14" height="12"><path d="M1 2.5H13M1 6H13M1 9.5H13" stroke="#777"/><circle cx="9" cy="2.5" r="1.5" fill="#ececec" stroke="#777"/><circle cx="4" cy="6" r="1.5" fill="#ececec" stroke="#777"/><circle cx="7" cy="9.5" r="1.5" fill="#ececec" stroke="#777"/></svg>
<div class="a" style="left:948px;top:643px;width:28px;height:1px;background:#ddd"></div>
<svg class="a" style="left:957px;top:654px" width="11" height="11"><circle cx="3" cy="3" r="2.2" fill="none" stroke="#666"/><circle cx="8" cy="3" r="2.2" fill="none" stroke="#666"/><circle cx="3" cy="8" r="2.2" fill="none" stroke="#666"/><circle cx="8" cy="8" r="2.2" fill="none" stroke="#666"/></svg>
<div class="a" style="left:955px;top:403px;width:22px;height:50px;background:#5c5c5c;border-radius:5px 0 0 5px"></div>
<svg class="a" style="left:960px;top:419px" width="10" height="18"><path d="M2 1.5L8 9L2 16.5" fill="none" stroke="#c8c8c8" stroke-width="1.6"/></svg>
<div class="a" style="left:2px;top:671px;width:974px;height:17px;background:#f4f4f4"></div>
<div class="t" style="left:6px;top:677px;font-size:8px;color:#555;letter-spacing:-0.5px;">页码：1</div>
<div class="t" style="left:38px;top:677px;font-size:8px;color:#555;letter-spacing:-0.5px;">页面：1/2</div>
<div class="t" style="left:77px;top:677px;font-size:8px;color:#555;letter-spacing:-0.5px;">节：1/1</div>
<div class="t" style="left:108px;top:677px;font-size:8px;color:#555;letter-spacing:-0.5px;">设置值：5.5厘米</div>
<div class="t" style="left:170px;top:677px;font-size:8px;color:#555;letter-spacing:-0.5px;">行：4</div>
<div class="t" style="left:192px;top:677px;font-size:8px;color:#555;letter-spacing:-0.5px;">列：31</div>
<div class="t" style="left:225px;top:677px;font-size:8px;color:#555;letter-spacing:-0.5px;">字数：528</div>
<div class="t" style="left:278px;top:677px;font-size:8px;color:#555;letter-spacing:-0.5px;">拼写检查</div>
<div class="t" style="left:330px;top:677px;font-size:8px;color:#555;letter-spacing:-0.5px;">文档校对</div>
<div class="a" style="left:268px;top:676px;width:8px;height:8px;border:1px solid #888"></div>
<div class="a" style="left:320px;top:676px;width:8px;height:8px;border:1px solid #888"></div>
<svg class="a" style="left:684px;top:673px" width="292" height="15" viewBox="684 673 292 15">
<g fill="none" stroke="#666" stroke-width="1">
 <path d="M686 677V675H688M694 675H696V677M696 683V685H694M688 685H686V683M687 684L695 676"/>
 <rect x="702.5" y="675.5" width="9" height="9"/><path d="M707 675.5V684.5"/>
 <path d="M718 684L719 681L725 675L727 677L721 683Z M717 685.5H727"/>
 <rect x="733.5" y="675.5" width="9" height="10"/><path d="M735.5 678.5H740.5M735.5 681H740.5M735.5 683.5H740.5"/>
 <rect x="750.5" y="675.5" width="9" height="10"/><path d="M753 678.5H757M753 681H757"/>
 <circle cx="771" cy="680.5" r="4.5"/><path d="M766.5 680.5H775.5M771 676V685M769 676.5Q767 680.5 769 684.5M773 676.5Q775 680.5 773 684.5"/>
 <ellipse cx="787" cy="682" rx="4" ry="3"/><circle cx="787" cy="682" r="1.5"/><path d="M784 677L785 679M790 677L789 679"/>
 <path d="M834 680.5H840M943 680.5H949M946 677.5V683.5M848 680.5H935"/>
 <path d="M958 677V675H960M964 675H966V677M966 683V685H964M960 685H958V683"/>
</g>
<rect x="730.5" y="673.5" width="15" height="13" rx="2" fill="#c8c8c8" opacity=".6"/>
<path d="M795.5 675V686" stroke="#e0e0e0"/>
<circle cx="882" cy="680.5" r="4.5" fill="#fff" stroke="#555"/>
<path d="M890.5 679V682" stroke="#aaa"/>
</svg>
<div class="t" style="left:805px;top:677px;font-size:7.5px;color:#666;">81%</div>
<div class="t" style="left:823px;top:678px;font-size:6px;color:#888;">▾</div>
<!-- bottom bar -->
<div class="a" style="left:0;top:735px;width:1199px;height:65px;background:#f9f9f9"></div>
<svg class="a" style="left:0;top:735px" width="1199" height="65" viewBox="0 0 1199 65">
 <g fill="#4a4b4f">
  <!-- mic -->
  <rect x="186.5" y="8" width="11" height="19" rx="5.5"/>
  <path d="M182.2 19.5C182.2 26.5 186.5 30 192 30C197.5 30 201.8 26.5 201.8 19.5" fill="none" stroke="#4a4b4f" stroke-width="2.2"/>
  <path d="M192 30V35" stroke="#4a4b4f" stroke-width="2.2"/>
  <rect x="184.5" y="34.5" width="15" height="2.5"/>
  <path d="M180.5 36.5L203 14" stroke="#f9f9f9" stroke-width="4"/>
  <path d="M180.5 36.5L203 14" stroke="#f23c3c" stroke-width="2.2"/>
  <!-- triangle -->
  <path d="M243 27.8L248.5 20.5L254 27.8Z"/>
  <!-- video -->
  <path d="M276 13H298V33H276Z"/>
  <path d="M298 20L305.8 14V32L298 26Z"/>
  <path d="M277 34.5L297 11.5" stroke="#f9f9f9" stroke-width="4.5"/>
  <path d="M277 34.5L297 11.5" stroke="#f23c3c" stroke-width="2.2"/>
  <path d="M328 27.8L333.5 20.5L339 27.8Z"/>
  <!-- share -->
  <rect x="368" y="13" width="30" height="20" rx="2.5"/>
  <rect x="375" y="35.5" width="16" height="2.5"/>
  <path d="M377.5 28.5C378 23.5 381 21 385.5 21V18.5L390 22.5L385.5 26.5V24C382 24 379.5 25.5 377.5 28.5Z" fill="#fff"/>
  <!-- invite -->
  <circle cx="467.5" cy="15.3" r="4.6"/>
  <path d="M455.2 35.5C455.5 27.5 460.5 22.8 467.5 22.8C472 22.8 475 24.5 477 27.5C471.5 28 468.5 32 469 35.5Z"/>
  <circle cx="476.5" cy="31.8" r="6.3" stroke="#f9f9f9" stroke-width="1.6"/>
  <path d="M476.5 28.5V35.1M473.2 31.8H479.8" stroke="#fff" stroke-width="1.7"/>
  <!-- members -->
  <circle cx="545" cy="15.3" r="4.6"/>
  <path d="M532.5 35.5C532.8 27.5 538 22.8 545 22.8C552 22.8 557.2 27.5 557.5 35.5Z"/>
  <path d="M550.5 11.5C552.5 13 553.2 16.5 551 19.5" fill="none" stroke="#4a4b4f" stroke-width="0.9"/>
  <path d="M555 24.5C558 27 559.5 31 559.7 35.5" fill="none" stroke="#4a4b4f" stroke-width="0.9"/>
  <!-- chat -->
  <path d="M610.5 13.5H632Q633.8 13.5 633.8 15.3V31Q633.8 32.8 632 32.8H627.5L625.3 35.8V32.8H610.5Q608.7 32.8 608.7 31V15.3Q608.7 13.5 610.5 13.5Z"/>
  <circle cx="614.8" cy="22.8" r="1.6" fill="#fff"/><circle cx="621" cy="22.8" r="1.6" fill="#fff"/><circle cx="627.2" cy="22.8" r="1.6" fill="#fff"/>
  <!-- record -->
  <circle cx="706" cy="22.8" r="13" fill="none" stroke="#4a4b4f" stroke-width="1.8"/>
  <circle cx="706" cy="22.8" r="10.3"/>
  <!-- emoji -->
  <circle cx="790.9" cy="22.8" r="13.9"/>
  <circle cx="786.2" cy="17.4" r="1.9" fill="#fff"/><circle cx="795.6" cy="17.4" r="1.9" fill="#fff"/>
  <path d="M784 23.5H797.8C797.8 28 795 30.5 790.9 30.5C786.8 30.5 784 28 784 23.5Z" fill="#fff"/>
  <!-- more -->
  <circle cx="864.6" cy="22.6" r="2.8"/><circle cx="875.8" cy="22.6" r="2.8"/><circle cx="887" cy="22.6" r="2.8"/>
 </g>
 <path d="M723 1H748.3V25.7Z" fill="#ff8a1f"/>
 <text x="0" y="2" transform="translate(738.5 9.5) rotate(45)" font-family="Liberation Sans" font-size="6" font-weight="bold" fill="#fff" text-anchor="middle">NEW</text>
</svg>
<div class="t" style="left:166px;top:776px;font-size:13px;color:#2b2b2b">解除静音</div>
<div class="t" style="left:265px;top:776px;font-size:13px;color:#2b2b2b">开启视频</div>
<div class="t" style="left:357px;top:776px;font-size:13px;color:#2b2b2b">共享屏幕</div>
<div class="t" style="left:455px;top:776px;font-size:13px;color:#2b2b2b">邀请</div>
<div class="t" style="left:520px;top:776px;font-size:13px;color:#2b2b2b">成员(27)</div>
<div class="t" style="left:608px;top:776px;font-size:13px;color:#2b2b2b">聊天</div>
<div class="t" style="left:693px;top:776px;font-size:13px;color:#2b2b2b">录制</div>
<div class="t" style="left:778px;top:776px;font-size:13px;color:#2b2b2b">表情</div>
<div class="t" style="left:863px;top:776px;font-size:13px;color:#2b2b2b">更多</div>
<div class="a" style="left:1061px;top:745px;width:95px;height:45px;border:1.5px solid #f65353;border-radius:6px"></div>
<div class="t" style="left:1074px;top:759px;font-size:17px;color:#f55050">离开会议</div>

</body></html>
